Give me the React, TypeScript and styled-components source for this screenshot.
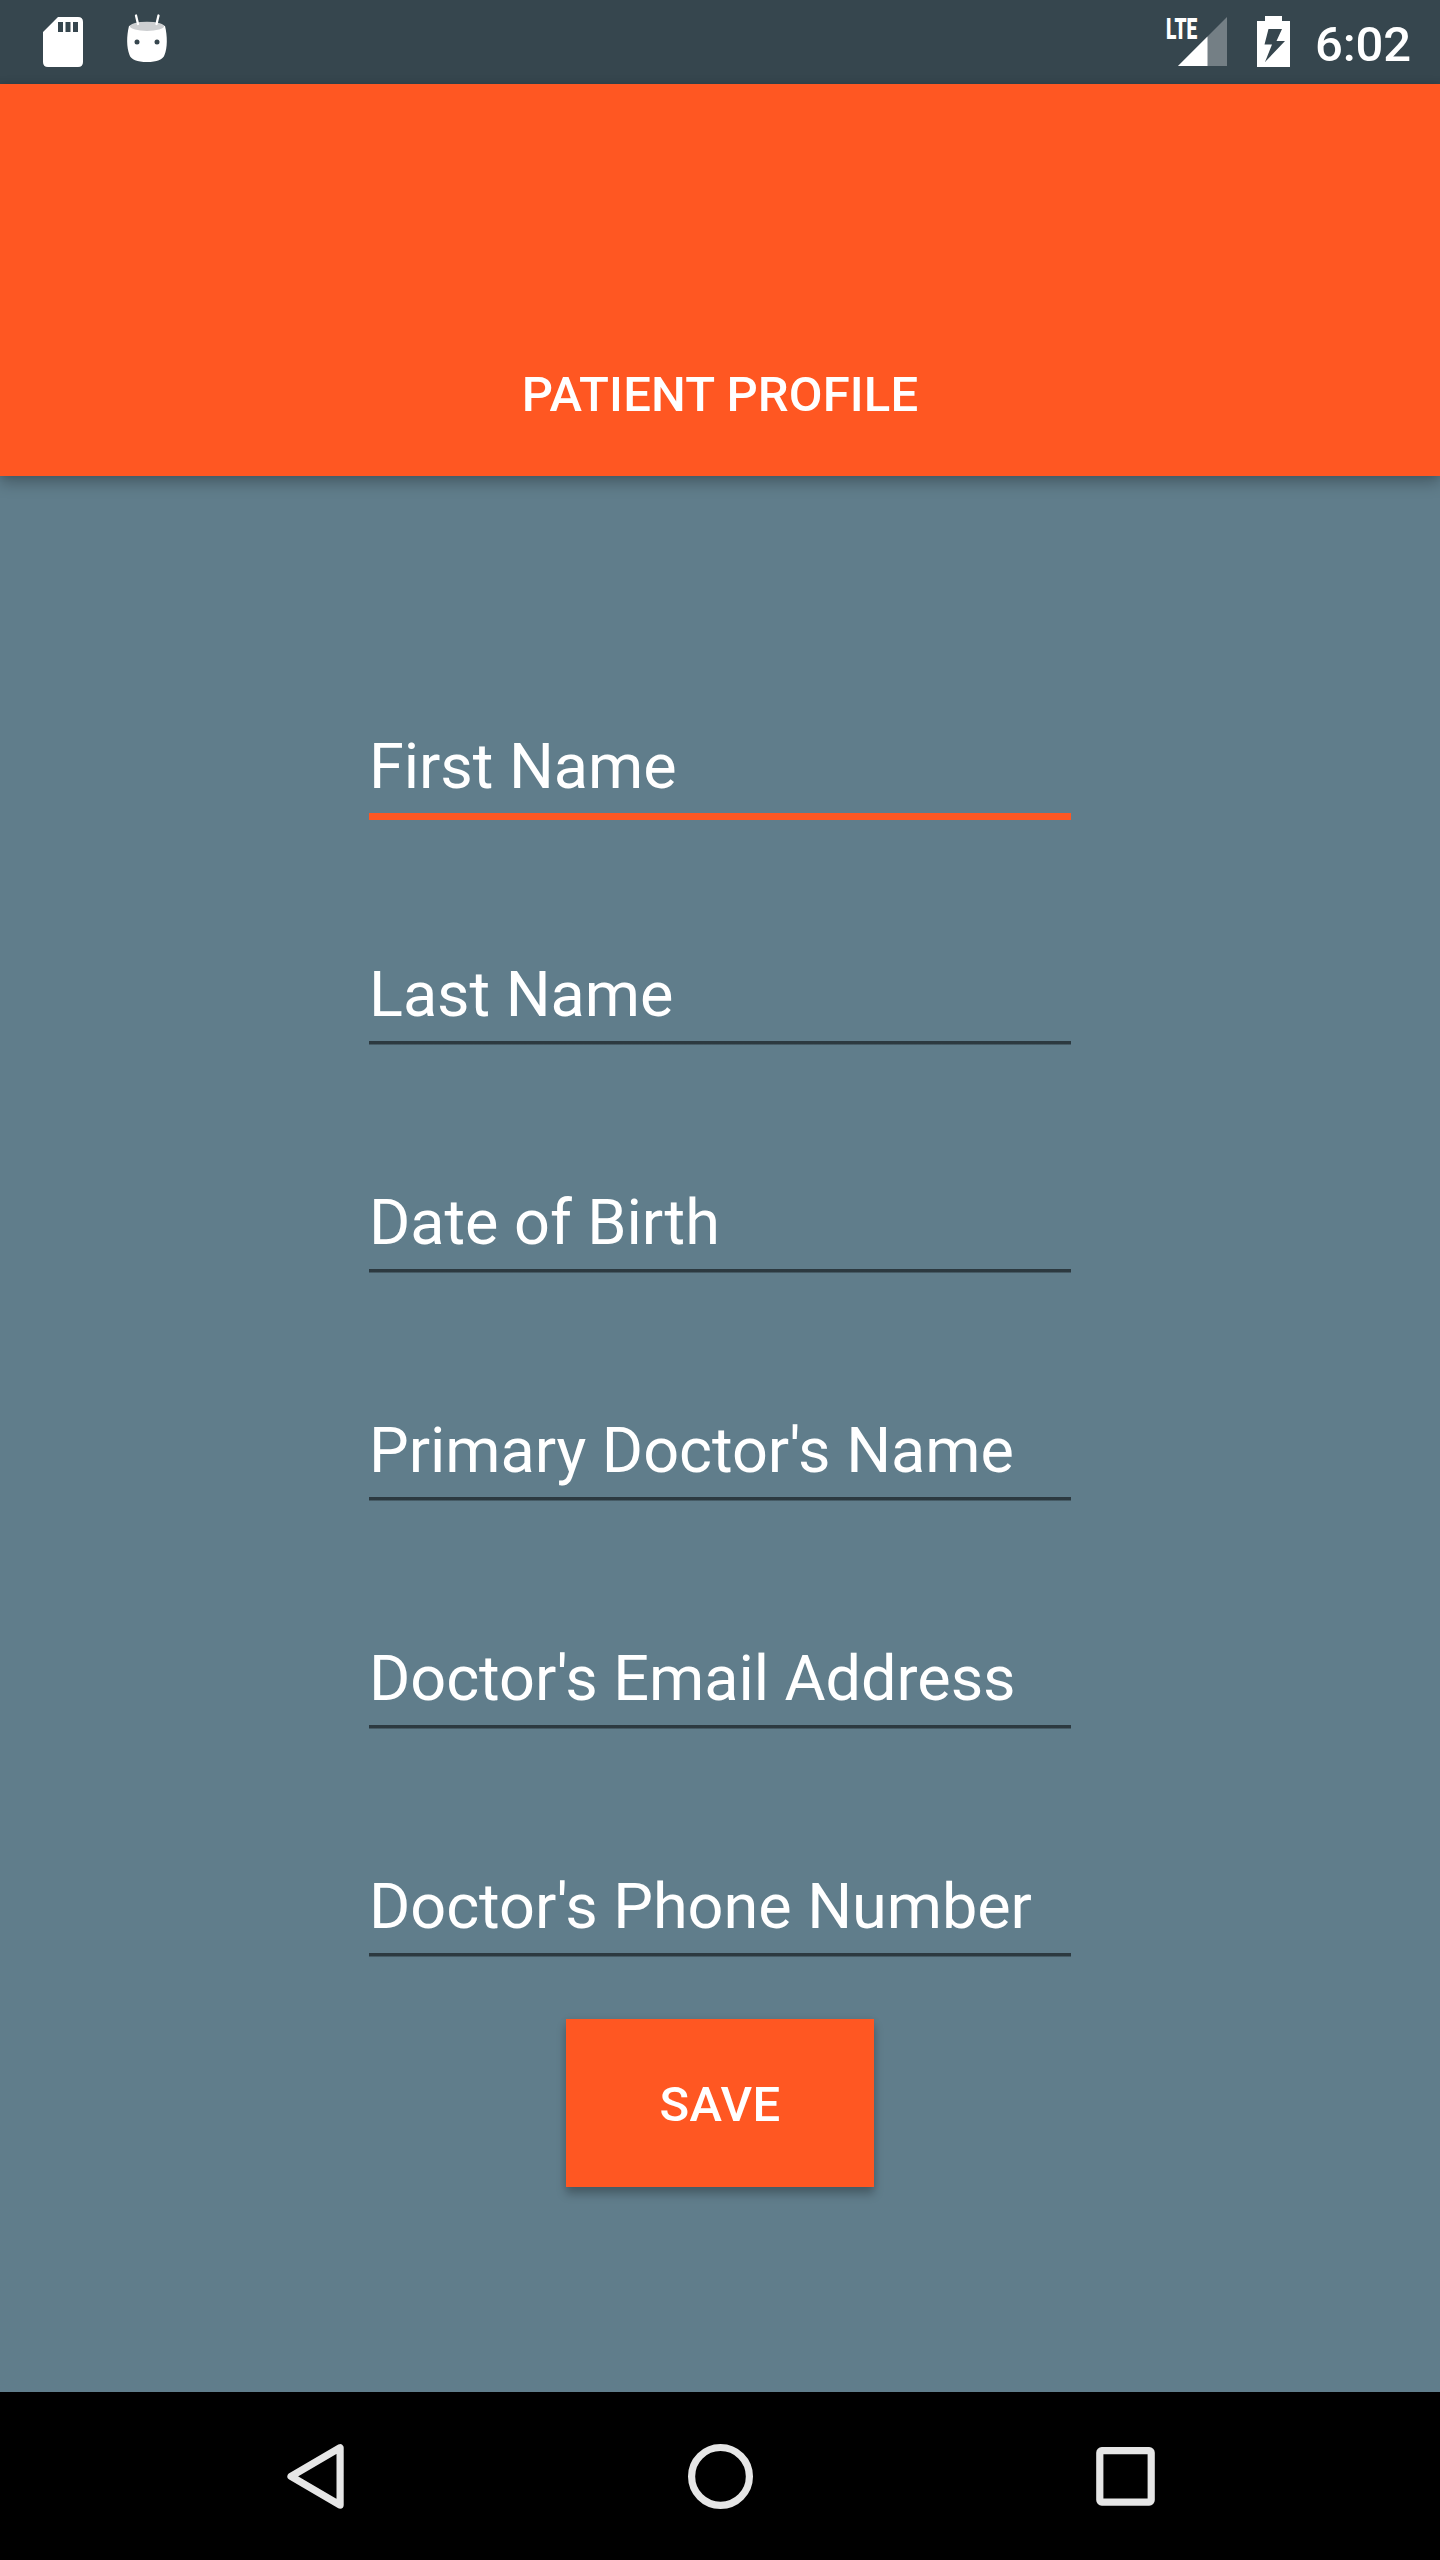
import React from "react";
import styled, { createGlobalStyle } from "styled-components";

const ORANGE = "#ff5722";

const GlobalStyle = createGlobalStyle`
  html, body { margin: 0; padding: 0; }
  body { background: #607d8b; font-family: Roboto, "Noto Sans", sans-serif; }
  *, *::before, *::after { box-sizing: border-box; }
`;

const Screen = styled.div`
  width: 1440px;
  height: 2560px;
  display: flex;
  flex-direction: column;
  overflow: hidden;
  background: #607d8b;
  color: #fff;
`;

const StatusBar = styled.header`
  height: 84px;
  flex: none;
  display: flex;
  justify-content: space-between;
  background: #36464e;
`;

const StatusGroup = styled.div`
  display: flex;
  align-items: flex-start;
`;

const Icon = styled.svg`
  display: block;
  flex: none;
`;

const NetworkType = styled.span`
  height: 84px;
  width: 11px;
  padding-top: 14px;
  font: 900 30px/30px Roboto, sans-serif;
  transform: scaleX(0.64);
  transform-origin: left top;
  white-space: nowrap;
`;

const Clock = styled.time`
  width: 98px;
  margin-right: 27px;
  padding-top: 16px;
  font: 500 49px/57px Roboto, sans-serif;
  letter-spacing: -0.1px;
  white-space: nowrap;
`;

const AppBar = styled.div`
  height: 392px;
  flex: none;
  display: flex;
  justify-content: center;
  align-items: flex-end;
  padding-bottom: 53px;
  background: ${ORANGE};
  box-shadow: 0 7px 14px rgba(0, 0, 0, 0.26), 0 0 7px rgba(0, 0, 0, 0.1);
`;

const Title = styled.h1`
  margin: 0;
  font: 500 49px/57px Roboto, sans-serif;
  letter-spacing: 0.15px;
  text-transform: uppercase;
`;

const Form = styled.main`
  flex: 1;
  display: flex;
  flex-direction: column;
  align-items: center;
  padding-top: 248px;
`;

const FieldList = styled.div`
  width: 702px;
  display: flex;
  flex-direction: column;
  gap: 132px;
`;

const Field = styled.div`
  height: 96px;
  display: flex;
  flex-direction: column;
  gap: 3px;
`;

const Hint = styled.span`
  font: 400 63px/86px Roboto, sans-serif;
  letter-spacing: -0.05px;
  white-space: nowrap;
`;

const Underline = styled.span<{ $focused: boolean }>`
  height: ${(p) => (p.$focused ? 7 : 4)}px;
  background: ${(p) =>
    p.$focused
      ? ORANGE
      : "linear-gradient(rgba(0,0,0,.54) 3px, rgba(0,0,0,.27) 3px)"};
`;

const SaveButton = styled.button`
  width: 308px;
  height: 168px;
  margin: 59px 0 0;
  padding: 3px 0 0;
  border: 0;
  background: ${ORANGE};
  color: #fff;
  font: 500 49px/57px Roboto, sans-serif;
  letter-spacing: 0.4px;
  text-transform: uppercase;
  box-shadow: 0 7px 9px rgba(0, 0, 0, 0.26), 0 0 7px rgba(0, 0, 0, 0.08);
`;

const NavBar = styled.nav`
  height: 168px;
  flex: none;
  display: flex;
  justify-content: center;
  background: #000;
`;

const NavItem = styled.div`
  width: 405px;
  display: flex;
  justify-content: center;
  align-items: center;
`;

const fields = [
  "First Name",
  "Last Name",
  "Date of Birth",
  "Primary Doctor's Name",
  "Doctor's Email Address",
  "Doctor's Phone Number",
];

const NavIcon = ({ children }: { children: React.ReactNode }) => (
  <Icon width="84" height="84" viewBox="0 0 84 84" fill="none" stroke="#e6e6e6" strokeWidth="7.2">
    {children}
  </Icon>
);

export default function App() {
  return (
    <>
      <GlobalStyle />
      <Screen>
        <StatusBar>
          <StatusGroup>
            <Icon width="84" height="84" viewBox="0 0 84 84">
              <path
                fill="#fff"
                fillRule="evenodd"
                d="M58 17H78Q83 17 83 22V62Q83 67 78 67H48Q43 67 43 62V32ZM58 22V32H63V22ZM65.500 22V32H70.500V22ZM73 22V32H78V22Z"
              />
            </Icon>
            <Icon width="84" height="84" viewBox="84 0 84 84">
              <path fill="#fff" d="M129 26Q147 18 165 26C167.500 36 167.500 48 164.500 55Q162 62 147 62Q132 62 129.500 55C126.500 47 126.500 36 129 26Z" />
              <ellipse cx="147" cy="26.300" rx="17" ry="4.600" fill="#cdcfd1" />
              <path d="M136 15.500L138 24M158.500 15.500L156.500 24" stroke="#fff" strokeWidth="2.300" strokeLinecap="round" />
              <circle cx="137" cy="42" r="2.500" fill="#36464e" />
              <circle cx="157" cy="42" r="2.500" fill="#36464e" />
            </Icon>
          </StatusGroup>
          <StatusGroup>
            <NetworkType>LTE</NetworkType>
            <Icon width="54" height="84" viewBox="1177 0 54 84">
              <path fill="#747f85" d="M1227 17V66H1178Z" />
              <path fill="#fff" d="M1207.500 36.500V66H1178Z" />
            </Icon>
            <Icon width="84" height="84" viewBox="1231 0 84 84">
              <path
                fill="#fff"
                fillRule="evenodd"
                d="M1265 16H1282V21H1290V67H1257V21H1265ZM1268.500 29L1264.500 44.500H1272L1265 62L1285 41H1276.500L1282 29Z"
              />
            </Icon>
            <Clock>6:02</Clock>
          </StatusGroup>
        </StatusBar>
        <AppBar>
          <Title>Patient Profile</Title>
        </AppBar>
        <Form>
          <FieldList>
            {fields.map((label, i) => (
              <Field key={label}>
                <Hint>{label}</Hint>
                <Underline $focused={i === 0} />
              </Field>
            ))}
          </FieldList>
          <SaveButton>Save</SaveButton>
        </Form>
        <NavBar>
          <NavItem>
            <NavIcon>
              <path d="M67.100 13.700V71.100L18 42.400Z" strokeLinejoin="round" />
            </NavIcon>
          </NavItem>
          <NavItem>
            <NavIcon>
              <circle cx="42.500" cy="42.400" r="28.900" />
            </NavIcon>
          </NavItem>
          <NavItem>
            <NavIcon>
              <rect x="16.800" y="16.700" width="51.400" height="51.400" rx="2" />
            </NavIcon>
          </NavItem>
        </NavBar>
      </Screen>
    </>
  );
}
